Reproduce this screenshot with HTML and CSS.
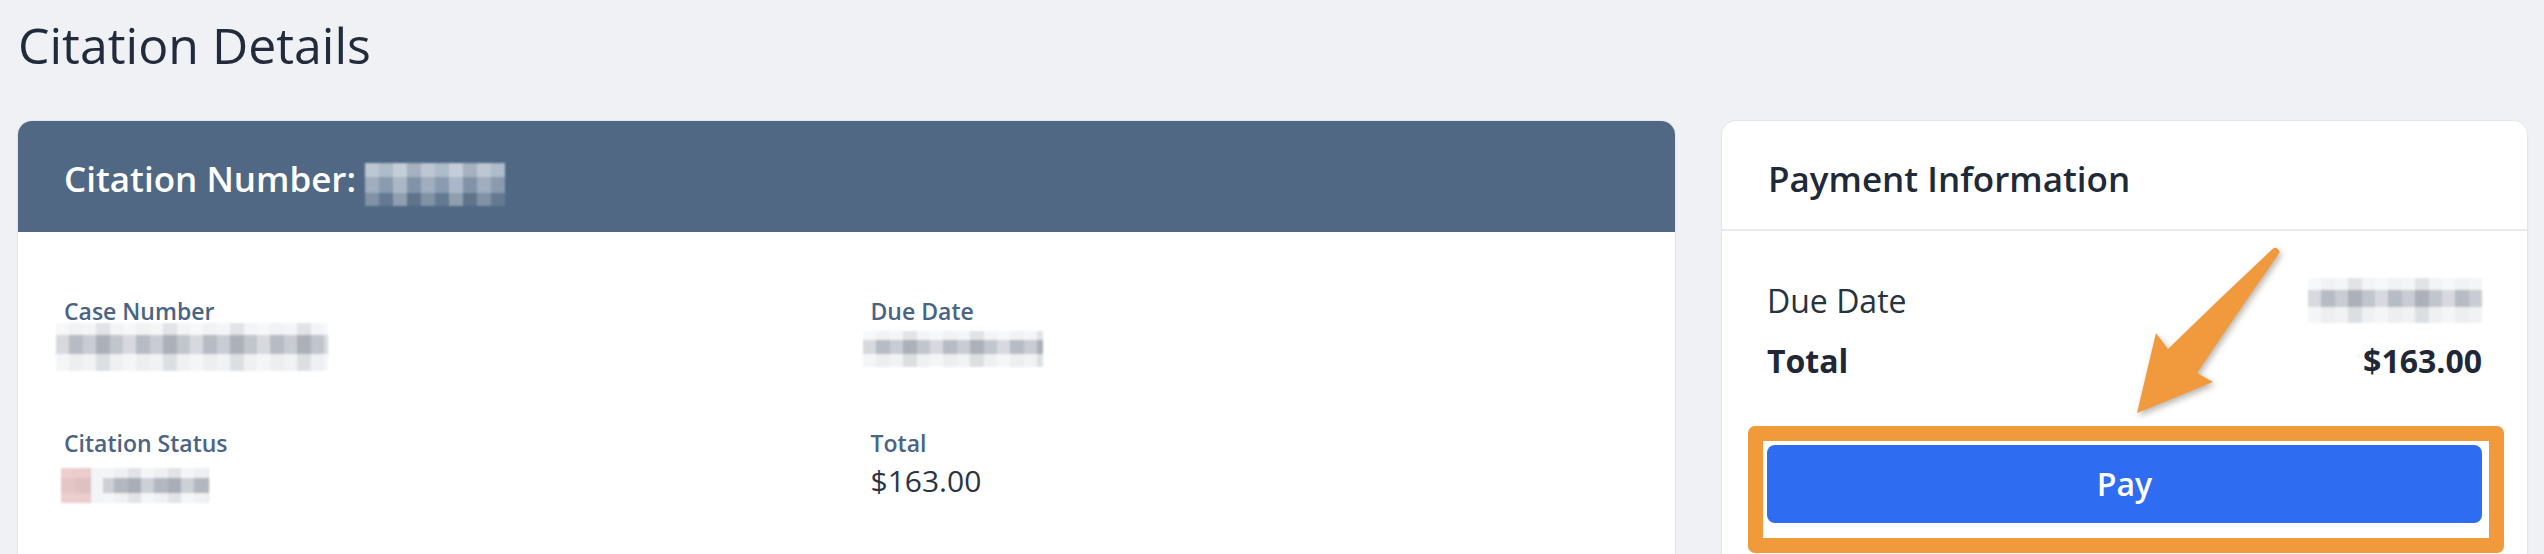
FILE: index.html
```html
<!DOCTYPE html>
<html lang="en">
<head>
<meta charset="utf-8">
<title>Citation Details</title>
<link rel="stylesheet" href="styles.css">
</head>
<body>
<main class="page">
  <h1 class="page-title">Citation Details</h1>
  <div class="layout">
    <section class="card citation-card">
      <header class="card-header card-header--dark">
        <h2 class="card-title">Citation Number: <span class="redact redact--header" aria-label="redacted"></span></h2>
      </header>
      <div class="details-grid">
        <div class="field">
          <div class="field-label">Case Number</div>
          <div class="field-value"><span class="redact redact--case" aria-label="redacted"></span></div>
        </div>
        <div class="field">
          <div class="field-label">Due Date</div>
          <div class="field-value"><span class="redact redact--date" aria-label="redacted"></span></div>
        </div>
        <div class="field">
          <div class="field-label">Citation Status</div>
          <div class="field-value"><span class="redact redact--status" aria-label="redacted"></span></div>
        </div>
        <div class="field">
          <div class="field-label">Total</div>
          <div class="field-value">$163.00</div>
        </div>
      </div>
    </section>

    <aside class="card payment-card">
      <header class="card-header card-header--light">
        <h2 class="card-title">Payment Information</h2>
      </header>
      <div class="payment-body">
        <div class="pay-row">
          <span>Due Date</span>
          <span class="redact redact--paydate" aria-label="redacted"></span>
        </div>
        <div class="pay-row pay-row--total">
          <span>Total</span>
          <span>$163.00</span>
        </div>
        <div class="pay-action">
          <button class="pay-btn" type="button">Pay</button>
          <span class="highlight-box"></span>
        </div>
      </div>
      <svg class="callout-arrow" width="180" height="190" viewBox="0 0 180 190" aria-hidden="true">
        <path d="M152 9.4 Q 100 58 48 109 L 36 93 L 17 173 L 93 142 L 77 133 Q 118 72 158.2 14.6 A 4 4 0 0 0 152 9.4 Z" fill="#f09a3d"/>
      </svg>
    </aside>
  </div>
</main>
</body>
</html>
```

FILE: styles.css
```css
* { box-sizing: border-box; }

html, body {
  margin: 0;
  padding: 0;
  height: 100%;
  overflow: hidden;
  background: #f0f1f5;
  font-family: "Open Sans", "Noto Sans", "Liberation Sans", sans-serif;
}

.page {
  padding: 15px 17px 0 18px;
}

.page-title {
  margin: 0;
  font-size: 50px;
  line-height: 60px;
  font-weight: 400;
  color: #212b3b;
}

.layout {
  margin-top: 46px;
  display: grid;
  grid-template-columns: minmax(0, 1fr) 805px;
  gap: 47px;
  align-items: start;
}

.card {
  background: #ffffff;
  border-radius: 14px;
  box-shadow: 0 0 0 1px #e3e6ec, 0 1px 3px rgba(30, 40, 60, 0.06);
  overflow: hidden;
}

.card-header {
  padding: 34px 46px 26px;
}

.card-header--dark {
  background: #506883;
  color: #ffffff;
}

.card-header--light {
  color: #1f2a38;
  border-bottom: 2px solid #e8eaef;
}

.card-title {
  margin: 0;
  font-size: 35px;
  line-height: 48px;
  font-weight: 600;
}

/* Pixelated redaction mosaics */
.redact {
  display: inline-block;
  background:
    repeating-linear-gradient(90deg, rgba(255,255,255,0.45) 0 13px, rgba(255,255,255,0) 13px 27px, rgba(255,255,255,0.25) 27px 40px, rgba(40,50,70,0.08) 40px 54px, rgba(255,255,255,0.15) 54px 67px),
    linear-gradient(180deg, #f1f2f4 0 26%, #b7bbc3 26% 64%, #eceef0 64% 100%);
  filter: blur(1.2px);
}

.redact--header {
  width: 140px;
  height: 43px;
  vertical-align: -14px;
  background:
    repeating-linear-gradient(90deg, rgba(255,255,255,0.18) 0 14px, rgba(255,255,255,0) 14px 28px, rgba(255,255,255,0.28) 28px 42px, rgba(0,0,0,0.05) 42px 56px),
    linear-gradient(180deg, #aebbc9 0 32%, #8a9bb0 32% 70%, #647a92 70% 100%);
}

.details-grid {
  display: grid;
  grid-template-columns: 1fr 1fr;
  column-gap: 48px;
  row-gap: 56px;
  padding: 63px 46px 70px;
}

.field-label {
  font-size: 23px;
  line-height: 32px;
  font-weight: 600;
  color: #4a6483;
  margin-bottom: 2px;
}

.field-value {
  font-size: 30px;
  line-height: 40px;
  color: #2a3444;
  height: 40px;
}

.field-value .redact {
  display: block;
}

.redact--case {
  width: 272px;
  height: 48px;
  margin: -6px 0 0 -8px;
}

.redact--date {
  width: 180px;
  height: 36px;
  margin: 4px 0 0 -8px;
}

.redact--status {
  width: 148px;
  height: 35px;
  margin: 9px 0 0 -3px;
  background:
    linear-gradient(90deg, rgba(234,196,196,0.8) 0 30px, #f3f4f6 30px 42px, rgba(255,255,255,0) 42px),
    repeating-linear-gradient(90deg, rgba(255,255,255,0.35) 0 13px, rgba(255,255,255,0) 13px 27px, rgba(40,50,70,0.07) 27px 40px),
    linear-gradient(180deg, #eef0f2 0 28%, #b3b7bf 28% 72%, #f0f1f3 72% 100%);
}

.payment-card {
  position: relative;
}

.payment-body {
  padding: 47px 45px 60px;
}

.pay-row {
  display: flex;
  justify-content: space-between;
  align-items: center;
  font-size: 32px;
  line-height: 44px;
  color: #29323f;
}

.pay-row + .pay-row {
  margin-top: 16px;
}

.pay-row--total {
  font-weight: 700;
  color: #1f2836;
}

.redact--paydate {
  width: 174px;
  height: 45px;
}

.pay-action {
  position: relative;
  margin-top: 62px;
}

.pay-btn {
  display: block;
  width: 100%;
  height: 78px;
  border: none;
  border-radius: 8px;
  background: #2e6cf1;
  color: #ffffff;
  font-family: inherit;
  font-size: 32px;
  font-weight: 600;
  line-height: 78px;
  padding: 0;
}

.highlight-box {
  position: absolute;
  top: -19px;
  left: -19px;
  right: -22px;
  bottom: -30px;
  border: 15px solid #f09a3c;
  border-radius: 7px;
  pointer-events: none;
}

.callout-arrow {
  position: absolute;
  left: 398px;
  top: 119px;
  overflow: visible;
  filter: drop-shadow(2px 3px 3px rgba(60, 40, 20, 0.35));
  pointer-events: none;
}
```
